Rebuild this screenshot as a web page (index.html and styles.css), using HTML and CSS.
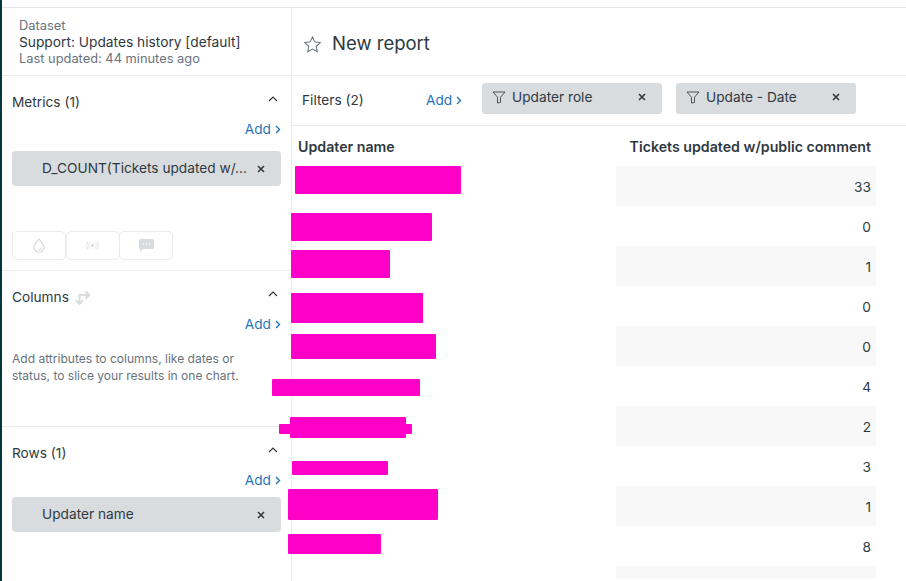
FILE: index.html
```html
<!DOCTYPE html>
<html lang="en">
<head>
<meta charset="utf-8">
<title>New report</title>
<link rel="stylesheet" href="styles.css">
</head>
<body>
<div class="page">
  <div class="rail-mark"></div>
  <div class="topbar"></div>
  <div class="workspace">
    <aside class="sidebar">
      <div class="dataset">
        <div class="muted">Dataset</div>
        <div class="dataset-name">Support: Updates history [default]</div>
        <div class="muted">Last updated: 44 minutes ago</div>
      </div>
      <section class="panel panel-metrics">
        <div class="panel-head"><span>Metrics (1)</span>
          <svg class="chev" width="10" height="6" viewBox="0 0 10 6"><path d="M1 5l4-4 4 4" fill="none" stroke="#2f3941" stroke-width="1.2"/></svg>
        </div>
        <div class="add-row"><a class="add">Add <svg width="6" height="9" viewBox="0 0 6 9"><path d="M1 1l3.5 3.5L1 8" fill="none" stroke="#1f73b7" stroke-width="1.4"/></svg></a></div>
        <div class="pill"><span class="pill-text">D_COUNT(Tickets updated w/...</span>
          <svg class="x" width="8" height="8" viewBox="0 0 8 8"><path d="M1 1l6 6M7 1L1 7" stroke="#2f3941" stroke-width="1.6"/></svg>
        </div>
        <div class="toolbar">
          <div class="tool"><svg width="12" height="15" viewBox="0 0 12 15"><path d="M6 1C4.500 3.400 1 6 1 9.200a5 5 0 0 0 10 0C11 6 7.500 3.400 6 1z" fill="none" stroke="#d3d6d9" stroke-width="1.100"/><path d="M8.500 9.500A2.600 2.600 0 0 1 6 12" fill="none" stroke="#d3d6d9"/></svg></div>
          <div class="tool"><svg width="15" height="9" viewBox="0 0 15 9"><circle cx="7.500" cy="4.500" r="1.500" fill="#d3d6d9"/><path d="M5 1.500a4 4 0 0 0 0 6M10 1.500a4 4 0 0 1 0 6M2.800.5a7 7 0 0 0 0 8M12.200.5a7 7 0 0 1 0 8" fill="none" stroke="#dfe2e4"/></svg></div>
          <div class="tool"><svg width="15" height="13" viewBox="0 0 15 13"><path d="M1.500 0h12A1.500 1.500 0 0 1 15 1.500v7a1.500 1.500 0 0 1-1.500 1.500H4l-3 3V10.000A1.500 1.500 0 0 1 0 8.500v-7A1.500 1.500 0 0 1 1.500 0z" fill="#d8dcde"/><circle cx="4.500" cy="5" r=".8" fill="#fff"/><circle cx="7.500" cy="5" r=".8" fill="#fff"/><circle cx="10.500" cy="5" r=".8" fill="#fff"/></svg></div>
        </div>
      </section>
      <section class="panel panel-columns">
        <div class="panel-head"><span class="head-group">Columns
          <svg width="16" height="16" viewBox="0 0 16 16"><path d="M4.500 15V6H14M10.500 2.500L14.300 6l-3.800 3.500M1 11.500l3.500 3.500L8 11.500" fill="none" stroke="#d8dcde" stroke-width="2"/></svg></span>
          <svg class="chev" width="10" height="6" viewBox="0 0 10 6"><path d="M1 5l4-4 4 4" fill="none" stroke="#2f3941" stroke-width="1.2"/></svg>
        </div>
        <div class="add-row"><a class="add">Add <svg width="6" height="9" viewBox="0 0 6 9"><path d="M1 1l3.500 3.500L1 8" fill="none" stroke="#1f73b7" stroke-width="1.400"/></svg></a></div>
        <p class="hint">Add attributes to columns, like dates or status, to slice your results in one chart.</p>
      </section>
      <section class="panel panel-rows">
        <div class="panel-head"><span>Rows (1)</span>
          <svg class="chev" width="10" height="6" viewBox="0 0 10 6"><path d="M1 5l4-4 4 4" fill="none" stroke="#2f3941" stroke-width="1.2"/></svg>
        </div>
        <div class="add-row"><a class="add">Add <svg width="6" height="9" viewBox="0 0 6 9"><path d="M1 1l3.500 3.500L1 8" fill="none" stroke="#1f73b7" stroke-width="1.400"/></svg></a></div>
        <div class="pill"><span class="pill-text">Updater name</span>
          <svg class="x" width="8" height="8" viewBox="0 0 8 8"><path d="M1 1l6 6M7 1L1 7" stroke="#2f3941" stroke-width="1.6"/></svg>
        </div>
      </section>
    </aside>
    <main class="main">
      <header class="report-head">
        <svg width="19" height="19" viewBox="0 0 18 18"><path d="M9 1.800l2.200 4.700 5.100.7-3.700 3.500.9 5.100L9 13.400l-4.500 2.400.9-5.100-3.700-3.500 5.100-.7z" fill="none" stroke="#68737d" stroke-width="1"/></svg>
        <h1>New report</h1>
      </header>
      <div class="filters">
        <span class="filters-label">Filters (2)</span>
        <a class="add">Add <svg width="6" height="9" viewBox="0 0 6 9"><path d="M1 1l3.500 3.500L1 8" fill="none" stroke="#1f73b7" stroke-width="1.400"/></svg></a>
        <div class="filter-pill">
          <svg width="14" height="13" viewBox="0 0 14 13"><path d="M1 1h12L8.500 6.200V11.500L5.500 12V6.200z" fill="none" stroke="#49545c" stroke-width="1"/></svg>
          <span class="filter-text">Updater role</span>
          <svg class="x" width="8" height="8" viewBox="0 0 8 8"><path d="M1 1l6 6M7 1L1 7" stroke="#2f3941" stroke-width="1.6"/></svg>
        </div>
        <div class="filter-pill">
          <svg width="14" height="13" viewBox="0 0 14 13"><path d="M1 1h12L8.500 6.200V11.500L5.500 12V6.200z" fill="none" stroke="#49545c" stroke-width="1"/></svg>
          <span class="filter-text">Update - Date</span>
          <svg class="x" width="8" height="8" viewBox="0 0 8 8"><path d="M1 1l6 6M7 1L1 7" stroke="#2f3941" stroke-width="1.6"/></svg>
        </div>
      </div>
      <div class="table">
        <div class="th th-name">Updater name</div><div class="th th-num">Tickets updated w/public comment</div>
        <div class="cell"></div><div class="num odd">33</div>
        <div class="cell"></div><div class="num">0</div>
        <div class="cell"></div><div class="num odd">1</div>
        <div class="cell"></div><div class="num">0</div>
        <div class="cell"></div><div class="num odd">0</div>
        <div class="cell"></div><div class="num">4</div>
        <div class="cell"></div><div class="num odd">2</div>
        <div class="cell"></div><div class="num">3</div>
        <div class="cell"></div><div class="num odd">1</div>
        <div class="cell"></div><div class="num">8</div>
        <div class="cell"></div><div class="num odd last"></div>
      </div>
    </main>
  </div>
  <div class="redact r1"></div>
  <div class="redact r2"></div>
  <div class="redact r3"></div>
  <div class="redact r4"></div>
  <div class="redact r5"></div>
  <div class="redact r6"></div>
  <div class="redact r7"></div>
  <div class="redact r7b"></div>
  <div class="redact r8"></div>
  <div class="redact r9"></div>
  <div class="redact r10"></div>
</div>
</body>
</html>
```
FILE: styles.css
```css
* { box-sizing: border-box; }
html, body { margin: 0; height: 100%; }
body {
  font-family: Inter, "Liberation Sans", sans-serif;
  font-size: 13.7px;
  color: #2f3941;
  background: #fff;
  overflow: hidden;
}
.page {
  position: relative;
  width: 906px;
  height: 581px;
  overflow: hidden;
  border-left: 2px solid #03363d;
}
.rail-mark {
  position: absolute;
  left: -2px;
  top: 62px;
  width: 2px;
  height: 51px;
  background: #5f8a90;
}
.topbar { height: 8px; border-bottom: 1px solid #e3e6e8; }
.workspace { display: flex; height: 573px; }

.sidebar {
  width: 290px;
  flex: none;
  border-right: 1px solid #e9ebed;
}
.dataset {
  height: 68px;
  padding: 10px 0 0 17px;
  border-bottom: 1px solid #e9ebed;
  line-height: 16.500px;
}
.muted { color: #68737d; font-size: 12.850px; }
.dataset-name { font-size: 13.750px; color: #2f3941; margin-top: -1px; margin-bottom: 1px; }

.panel { padding: 16px 10px 0; border-bottom: 1px solid #e9ebed; }
.panel-metrics { height: 195px; }
.panel-columns { height: 156px; }
.panel-rows { border-bottom: 0; }
.panel-head {
  display: flex;
  align-items: center;
  justify-content: space-between;
  height: 20px;
  padding-right: 3px;
  color: #2f3941;
}
.head-group { display: flex; align-items: center; gap: 6px; }
.chev { margin-top: -7px; }
.add-row { display: flex; justify-content: flex-end; margin-top: 7px; height: 20px; align-items: center; }
.add {
  display: inline-flex;
  align-items: center;
  gap: 4px;
  color: #1f73b7;
}
.pill {
  display: flex;
  align-items: center;
  justify-content: space-between;
  height: 35px;
  margin-top: 12px;
  padding: 0 16px 0 30px;
  background: #d8dcde;
  border-radius: 4px;
}
.pill-text { color: #2f3941; margin-top: -2px; }
.panel-rows .pill { margin-top: 7px; }
.toolbar { display: flex; margin-top: 45px; }
.tool {
  display: flex;
  align-items: center;
  justify-content: center;
  width: 54px;
  height: 29px;
  margin-right: -0.5px;
  border: 1px solid #e9ebed;
  border-radius: 5px;
}
.hint {
  margin: 17px 0 0;
  width: 240px;
  font-size: 12.050px;
  line-height: 16.500px;
  color: #68737d;
}

.main { flex: 1; min-width: 0; }
.report-head {
  display: flex;
  align-items: center;
  gap: 10px;
  height: 68px;
  padding-left: 11px;
  border-bottom: 1px solid #e9ebed;
}
.report-head svg { margin-top: 6px; }
h1 { margin: 2px 0 0; font-size: 18.500px; font-weight: 400; color: #2f3941; }
.filters {
  display: flex;
  align-items: flex-start;
  height: 50px;
  padding: 7px 0 0 10px;
  border-bottom: 1px solid #e9ebed;
}
.filters-label { width: 124px; margin-top: 9px; line-height: 16px; }
.filters .add { margin-top: 9px; width: 56px; line-height: 16px; }
.filter-pill {
  display: flex;
  align-items: center;
  width: 180px;
  height: 31px;
  margin-right: 14px;
  padding: 0 16px 3px 10px;
  background: #d8dcde;
  border-radius: 3px;
}
.filter-text { flex: 1; margin-left: 6px; }

.table {
  display: grid;
  grid-template-columns: 324px 260px;
  grid-auto-rows: 40px;
}
.th { font-weight: 600; font-size: 14.200px; height: 40px; padding-top: 13px; line-height: 16px; }
.th-name { padding-left: 6px; }
.th-num { text-align: right; padding-right: 5px; white-space: nowrap; }
.num {
  height: 40px;
  padding: 12.500px 5px 0 0;
  line-height: 16px;
  text-align: right;
  color: #2f3941;
}
.odd { background: #f8f8f8; }
.last { height: 6px; }

.redact { position: absolute; background: #ff00c8; border-radius: 1px; }
.r1 { left: 293px; top: 166px; width: 166px; height: 28px; }
.r2 { left: 289px; top: 213px; width: 141px; height: 28px; }
.r3 { left: 289px; top: 250px; width: 99px; height: 28px; }
.r4 { left: 289px; top: 293px; width: 132px; height: 30px; }
.r5 { left: 289px; top: 334px; width: 145px; height: 25px; }
.r6 { left: 270px; top: 379px; width: 148px; height: 17px; }
.r7 { left: 288px; top: 417px; width: 116px; height: 21px; }
.r7b { left: 277px; top: 424px; width: 133px; height: 10px; }
.r8 { left: 290px; top: 461px; width: 96px; height: 14px; }
.r9 { left: 286px; top: 489px; width: 150px; height: 31px; }
.r10 { left: 286px; top: 534px; width: 93px; height: 20px; }
```
